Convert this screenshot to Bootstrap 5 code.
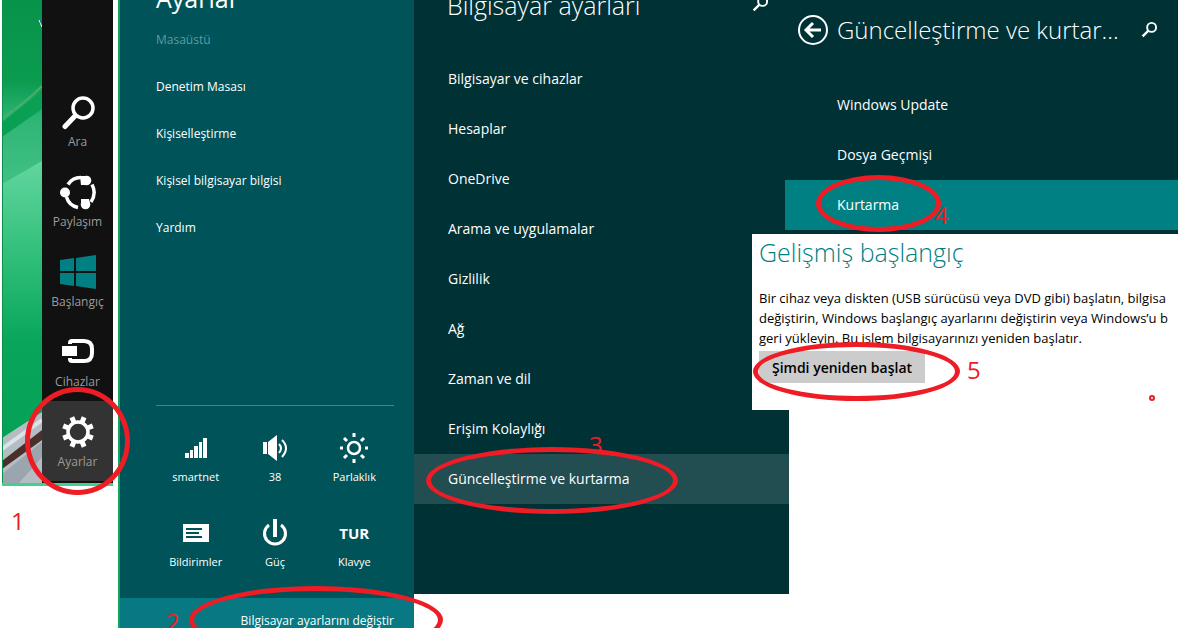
<!DOCTYPE html>
<html lang="tr">
<head>
<meta charset="utf-8">
<meta name="viewport" content="width=device-width, initial-scale=1">
<title>Gelişmiş başlangıç</title>
<link href="https://cdn.jsdelivr.net/npm/bootstrap@5.3.0/dist/css/bootstrap.min.css" rel="stylesheet">
<style>
  :root { --ink: #003135; --teal: #005459; --bright: #008083; --pen: #ee1c24; }
  body { font-family: "Open Sans", "Noto Sans", sans-serif; font-size: 14px; background: #fff; color: #fff; }
  a, button { color: inherit; text-decoration: none; }
  button { background: none; border: 0; padding: 0; }
  svg { display: block; fill: currentColor; }
  h1, h2 { font-weight: 300; margin: 0; white-space: nowrap; }

  /* charms bar */
  .charms { flex: 0 0 111px; margin: 0 5px 0 2px; border-bottom: 3px solid #43cf90; background: #111; }
  .wallpaper { flex: 0 0 40px; }
  .wallpaper svg { width: 100%; height: 100%; }
  .charm-list { padding: 81px 0 2px; }
  .charm { height: 80px; padding-top: 13px; font-size: 12px; line-height: 16px; color: #9b9b9b; }
  .charm svg { width: 36px; height: 36px; color: #fff; margin-bottom: 4px; }
  .charm svg.start-logo { color: var(--bright); }
  .charm.current { background: #333; }

  /* settings pane */
  .settings { flex: 294 1 0; min-width: 0; background: var(--teal); border-left: 2px solid #12a45c; }
  .settings-body { padding: 0 20px 0 36px; }
  .settings h1 { font-size: 25px; line-height: 36px; margin-top: -20px; font-weight: 400; }
  .settings-list { font-size: 12px; }
  .settings-list a { display: block; line-height: 47px; }
  .settings-list a.off { color: #5d9ba0; }
  .rule { border-top: 1px solid #458589; margin-top: 154px; padding-top: 9px; }
  .tile { height: 85px; font-size: 11px; line-height: 16px; }
  .tile .glyph { height: 36px; margin-bottom: 3px; }
  .tile .lang { font-size: 15px; font-weight: 700; }
  .change { height: 46px; margin-top: 13px; padding-right: 20px; background: #087983; font-size: 12px; }

  /* computer settings and update panes */
  .pc { flex: 375 1 0; min-width: 0; background: var(--ink); padding-bottom: 90px; }
  .pc-head { height: 54px; padding: 0 20px 0 33px; }
  .pc-head h2 { font-size: 25px; line-height: 34px; margin-top: -12px; }
  .update-head h2 { font-size: 24px; line-height: 34px; }
  .pc-head button { margin-top: -5px; }
  .menu a { display: block; line-height: 50px; padding-left: 34px; }
  .menu a.hot { background: #224d51; }
  .update-col { flex: 389 1 0; min-width: 0; margin-right: 19px; z-index: 2; }
  .update { background: var(--ink); padding-bottom: 4px; }
  .update-head { height: 80px; padding: 13px 20px 0 9px; gap: 9px; }
  .update .menu a { padding-left: 52px; margin-left: -4px; }
  .update .menu a.hot { background: var(--bright); }
  .restart { background: #fff; color: #000; margin: 0 -4px 0 -37px; padding: 1px 0 27px 7px; }
  .restart h2 { color: var(--bright); font-size: 25px; line-height: 34px; margin-bottom: 19px; }
  .restart p { font-size: 13px; line-height: 20px; margin: 0 0 3px; white-space: nowrap; overflow: hidden; }
  .restart button { background: #ccc; width: 166px; height: 32px; font-weight: 600; }

  /* red pen marks over the panes */
  .ring { position: absolute; border: 5px solid var(--pen); border-radius: 50%; pointer-events: none; z-index: 3; }
  .digit { position: absolute; color: var(--pen); font: 24px/24px "Open Sans", sans-serif; }
  .r1 { left: -17px; top: -14px; width: 105px; height: 108px; }
  .d1 { left: 9px; top: 509px; }
  .r2 { left: 69px; top: -12px; width: 254px; height: 68px; }
  .d2 { left: 46px; top: 12px; }
  .r3 { left: 12px; top: -7px; width: 252px; height: 67px; }
  .d3 { left: 175px; top: -21px; height: 17px; overflow: hidden; }
  .r4 { left: 31px; top: -5px; width: 125px; height: 57px; }
  .d4 { left: 150px; top: 23px; }
  .r5 { left: -6px; top: -9px; width: 207px; height: 59px; }
  .d5 { left: 208px; top: 7px; }
  .dot { right: 27px; bottom: 9px; width: 6px; height: 6px; border-width: 2px; }
</style>
</head>
<body>
<svg class="d-none">
  <symbol id="search" viewBox="0 0 16 16"><circle cx="10" cy="6" r="4.2" fill="none" stroke="currentColor" stroke-width="1.8"/><path d="M7 9 1.5 14.5" stroke="currentColor" stroke-width="2.2"/></symbol>
</svg>
<main class="d-flex align-items-start vh-100 overflow-hidden">

  <aside class="charms d-flex position-relative">
    <div class="wallpaper">
      <svg viewBox="0 0 40 483" preserveAspectRatio="none" aria-hidden="true">
        <defs>
          <linearGradient id="sky" x2="0" y2="1"><stop offset="0" stop-color="#07934a"/><stop offset=".17" stop-color="#0b9c50"/><stop offset=".25" stop-color="#2fb676"/><stop offset=".36" stop-color="#3fbf82"/><stop offset="1" stop-color="#35bb79"/></linearGradient>
          <linearGradient id="leaf" x2="0" y2="1"><stop offset="0" stop-color="#62d6a0"/><stop offset=".35" stop-color="#2fbe78"/><stop offset=".65" stop-color="#08a55b"/><stop offset="1" stop-color="#05a157"/></linearGradient>
        </defs>
        <path fill="url(#sky)" d="M0 0h40v483H0z"/>
        <path fill="#0aa054" d="M0 122 40 91v18L0 137z"/>
        <path fill="none" stroke="#4aae68" stroke-width="2" d="M0 118Q22 104 40 86"/>
        <path fill="url(#leaf)" d="M0 184 40 161v260L0 441z"/>
        <path fill="#b5bdc4" d="M0 438 40 412v71H0z"/>
        <path fill="none" stroke="#dce3e8" stroke-width="4" d="M0 449 40 420"/>
        <path fill="#49302a" d="M0 461 40 430v10L0 469z"/>
        <path fill="#9aa5ae" d="M0 474 40 442v15L17 483H0z"/>
        <path fill="none" stroke="#fff" d="m37 20 3 7"/>
        <path fill="none" stroke="#2468b8" stroke-width="2" d="m39 20 1 4"/>
        <path fill="none" stroke="#07944a" stroke-width="1" d="M.5 0v483"/>
      </svg>
    </div>
    <nav class="charm-list flex-fill" aria-label="Düğmeler">
      <a class="charm d-flex flex-column align-items-center" href="#ara">
        <svg viewBox="0 0 36 36"><circle cx="23" cy="14" r="10" fill="none" stroke="currentColor" stroke-width="3.5"/><path d="M15 22 5 32.500" stroke="currentColor" stroke-width="5" stroke-linecap="round"/></svg>Ara</a>
      <a class="charm d-flex flex-column align-items-center" href="#paylas">
        <svg viewBox="0 0 36 36"><g fill="none" stroke="currentColor" stroke-width="3.500"><path d="M8 10.500A15 15 0 0 1 21 3.500"/><path d="M32 10.500A17 17 0 0 1 31 28"/><path d="M6.500 23A15 15 0 0 0 18 33.500"/></g><circle cx="5" cy="18.500" r="5"/><circle cx="26.500" cy="6.500" r="4.800"/><path d="M20 2h5v9h-4z"/><circle cx="25.500" cy="30.500" r="4.800"/><path d="M21 25h8l1 5h-9z"/></svg>Paylaşım</a>
      <a class="charm d-flex flex-column align-items-center" href="#baslangic">
        <svg class="start-logo" viewBox="0 0 36 36"><path d="m0 6 14-2v13H0zM16 4l20-3v16H16zM0 19h14v13L0 30zM16 19h20v16l-20-3z"/></svg>Başlangıç</a>
      <a class="charm d-flex flex-column align-items-center" href="#cihazlar">
        <svg viewBox="0 0 36 36"><path d="M10 10V9q0-2 2-2h12q8 0 8 8v4q0 8-8 8H12q-2 0-2-2v-1" fill="none" stroke="currentColor" stroke-width="4"/><path stroke="#111" d="M1.500 11.500h16v11h-16z"/></svg>Cihazlar</a>
      <a class="charm current d-flex flex-column align-items-center position-relative" href="#ayarlar">
        <svg viewBox="0 0 36 36"><circle cx="18" cy="18" r="10" fill="none" stroke="currentColor" stroke-width="3.5"/><g stroke="currentColor" stroke-width="5"><path d="M18 2v5M18 29v5M2 18h5M29 18h5" transform="rotate(22.5 18 18)"/><path d="M18 2v5M18 29v5M2 18h5M29 18h5" transform="rotate(67.5 18 18)"/></g></svg>Ayarlar
        <span class="ring r1"></span></a>
    </nav>
    <span class="digit d1">1</span>
  </aside>

  <section class="settings position-relative min-vh-100">
    <div class="settings-body">
      <h1>Ayarlar</h1>
      <nav class="settings-list">
        <a class="off" href="#masaustu">Masaüstü</a>
        <a href="#denetim">Denetim Masası</a>
        <a href="#kisisel">Kişiselleştirme</a>
        <a href="#bilgi">Kişisel bilgisayar bilgisi</a>
        <a href="#yardim">Yardım</a>
      </nav>
      <div class="rule row g-0">
        <button class="tile col-4"><span class="glyph d-flex align-items-center justify-content-center"><svg width="22" height="20"><path d="M0 15h4v5H0zM5 12h3v8H5zM9 8h4v12H9zM14 4h3v16h-3zM18 0h4v20h-4z"/></svg></span>smartnet</button>
        <button class="tile col-4"><span class="glyph d-flex align-items-center justify-content-center"><svg width="26" height="28"><path d="M1 8h4v12H1zM6 8l9-7v26l-9-7z"/><path d="M17 10q4 4 0 9M20 6q8 8 0 17" fill="none" stroke="currentColor" stroke-width="2"/></svg></span>38</button>
        <button class="tile col-4"><span class="glyph d-flex align-items-center justify-content-center"><svg width="28" height="30" viewBox="0 0 28 30"><circle cx="14" cy="15" r="6" fill="none" stroke="currentColor" stroke-width="2.5"/><path d="M14 0v4M14 26v4M0 15h3M25 15h3M4 5l3 3M21 22l3 3M4 25l3-3M21 8l3-3" stroke="currentColor" stroke-width="3"/></svg></span>Parlaklık</button>
        <button class="tile col-4"><span class="glyph d-flex align-items-center justify-content-center"><svg width="26" height="18"><path fill-rule="evenodd" d="M0 0h26v18H0zM3 4v2h16V4zM3 8v2h13V8zM3 12v2h16v-2z"/></svg></span>Bildirimler</button>
        <button class="tile col-4"><span class="glyph d-flex align-items-center justify-content-center"><svg width="26" height="28"><path d="M7 6a10.500 10.500 0 1 0 12 0" fill="none" stroke="currentColor" stroke-width="3"/><path d="M11 0h4v18h-4z"/></svg></span>Güç</button>
        <button class="tile col-4"><span class="glyph lang d-flex align-items-center justify-content-center">TUR</span>Klavye</button>
      </div>
    </div>
    <a class="change d-flex align-items-center justify-content-end position-relative" href="#degistir">
      <span class="digit d2">2</span>Bilgisayar ayarlarını değiştir<span class="ring r2"></span></a>
  </section>

  <section class="pc">
    <div class="pc-head d-flex justify-content-between align-items-start">
      <h2>Bilgisayar ayarları</h2>
      <button aria-label="Ara"><svg width="17" height="17"><use href="#search"/></svg></button>
    </div>
    <nav class="menu">
      <a href="#cihaz">Bilgisayar ve cihazlar</a>
      <a href="#hesap">Hesaplar</a>
      <a href="#onedrive">OneDrive</a>
      <a href="#arama">Arama ve uygulamalar</a>
      <a href="#gizlilik">Gizlilik</a>
      <a href="#ag">Ağ</a>
      <a href="#zaman">Zaman ve dil</a>
      <a href="#erisim">Erişim Kolaylığı</a>
      <a class="hot position-relative" href="#guncelle">Güncelleştirme ve kurtarma<span class="digit d3">3</span><span class="ring r3"></span></a>
    </nav>
  </section>

  <div class="update-col position-relative">
    <section class="update">
      <div class="update-head d-flex align-items-start">
        <button aria-label="Geri"><svg width="30" height="34"><g fill="none" stroke="currentColor"><circle cx="15" cy="17" r="14" stroke-width="2"/><path d="M23 17H9M15 10l-7 7 7 7" stroke-width="3"/></g></svg></button>
        <h2>Güncelleştirme ve kurtar...</h2>
        <button class="ms-auto mt-2" aria-label="Ara"><svg width="17" height="17"><use href="#search"/></svg></button>
      </div>
      <nav class="menu">
        <a href="#wu">Windows Update</a>
        <a href="#dosya">Dosya Geçmişi</a>
        <a class="hot position-relative" href="#kurtarma">Kurtarma<span class="digit d4">4</span><span class="ring r4"></span></a>
      </nav>
    </section>
    <section class="restart position-relative">
      <h2>Gelişmiş başlangıç</h2>
      <p>Bir cihaz veya diskten (USB sürücüsü veya DVD gibi) başlatın, bilgisa<br>değiştirin, Windows başlangıç ayarlarını değiştirin veya Windows’u b<br>geri yükleyin. Bu işlem bilgisayarınızı yeniden başlatır.</p>
      <div class="position-relative">
        <button>Şimdi yeniden başlat</button>
        <span class="ring r5"></span><span class="digit d5">5</span>
      </div>
      <span class="ring dot"></span>
    </section>
  </div>
</main>
<script src="https://cdn.jsdelivr.net/npm/bootstrap@5.3.0/dist/js/bootstrap.bundle.min.js"></script>
</body>
</html>
